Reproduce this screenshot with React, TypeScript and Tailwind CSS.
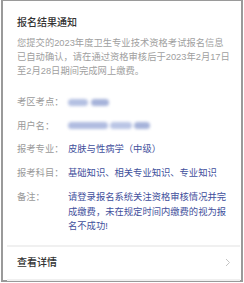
import React from "react";

const ff = { fontFamily: '"Liberation Sans", "Noto Sans CJK SC", sans-serif' };

function Row({ label, children, top }: { label: string; children: React.ReactNode; top?: boolean }) {
  return (
    <div className={`flex ${top ? "items-start" : "items-center"}`}>
      <div className="w-[51px] shrink-0 text-[#9a9a9a] text-[9.3px] leading-[14px]">{label}</div>
      <div className="text-[#3f4f9c] text-[9.3px] leading-[14.5px]">{children}</div>
    </div>
  );
}

export default function App() {
  return (
    <div className="w-[244px] h-[283px] bg-white" style={ff}>
      <div className="ml-[1px] w-[242px] h-[282px] border-[#9a9a9a] border-l-2 border-r-2 border-t border-b-2 flex flex-col">
        <div className="pl-[14px] pt-[15px]">
          <div className="text-[10px] leading-[14px] text-[#333] font-medium">报名结果通知</div>
          <div className="mt-[6px] text-[9.3px] leading-[14px] text-[#a0a0a0] whitespace-nowrap">
            您提交的2023年度卫生专业技术资格考试报名信息
            <br />
            已自动确认，请在通过资格审核后于2023年2月17日
            <br />
            至2月28日期间完成网上缴费。
          </div>
          <div className="mt-[17px] flex flex-col gap-[9.5px]">
            <Row label="考区考点：">
              <span className="flex gap-[3px] blur-[1.5px]">
                <span className="inline-block w-[20px] h-[7px] bg-[#b4c0e2] rounded-sm" />
                <span className="inline-block w-[18px] h-[7px] bg-[#a6b3da] rounded-sm" />
              </span>
            </Row>
            <Row label="用户名：">
              <span className="flex gap-[2px] blur-[1.5px]">
                <span className="inline-block w-[40px] h-[7px] bg-[#b0bce0] rounded-sm" />
                <span className="inline-block w-[22px] h-[7px] bg-[#bac5e5] rounded-sm" />
                <span className="inline-block w-[16px] h-[7px] bg-[#a6b3da] rounded-sm" />
              </span>
            </Row>
            <Row label="报考专业：">皮肤与性病学（中级）</Row>
            <Row label="报考科目：">基础知识、相关专业知识、专业知识</Row>
            <Row label="备注：" top>
              <span className="whitespace-nowrap">
                请登录报名系统关注资格审核情况并完
                <br />
                成缴费，未在规定时间内缴费的视为报
                <br />
                名不成功!
              </span>
            </Row>
          </div>
        </div>
        <div className="mt-[11px] ml-[4px] mr-[1px] h-[2px] shrink-0 bg-[#f0f0f0]" />
        <div className="h-[32px] shrink-0 flex items-center justify-between pl-[14px] pr-[10px]">
          <span className="text-[10px] text-[#333] font-medium">查看详情</span>
          <svg width="6" height="9" viewBox="0 0 6 9" fill="none">
            <path d="M1 1 L4.5 4.5 L1 8" stroke="#c4c4c4" strokeWidth="1" />
          </svg>
        </div>
        <div className="ml-[4px] mr-[1px] h-[2px] shrink-0 bg-[#f0f0f0]" />
      </div>
    </div>
  );
}
